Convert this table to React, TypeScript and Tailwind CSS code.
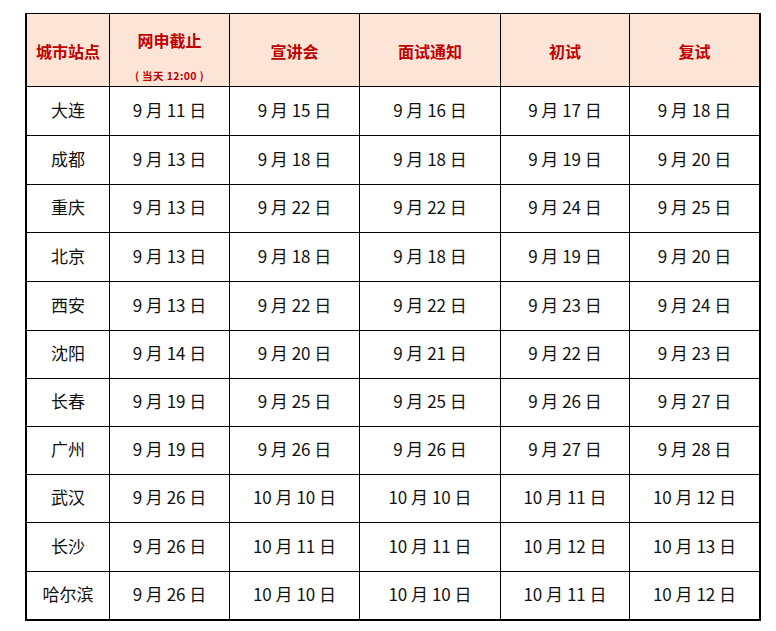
import React from "react";

const headers = ["城市站点", "网申截止", "宣讲会", "面试通知", "初试", "复试"];

const rows: string[][] = [
  ["大连", "9 月 11 日", "9 月 15 日", "9 月 16 日", "9 月 17 日", "9 月 18 日"],
  ["成都", "9 月 13 日", "9 月 18 日", "9 月 18 日", "9 月 19 日", "9 月 20 日"],
  ["重庆", "9 月 13 日", "9 月 22 日", "9 月 22 日", "9 月 24 日", "9 月 25 日"],
  ["北京", "9 月 13 日", "9 月 18 日", "9 月 18 日", "9 月 19 日", "9 月 20 日"],
  ["西安", "9 月 13 日", "9 月 22 日", "9 月 22 日", "9 月 23 日", "9 月 24 日"],
  ["沈阳", "9 月 14 日", "9 月 20 日", "9 月 21 日", "9 月 22 日", "9 月 23 日"],
  ["长春", "9 月 19 日", "9 月 25 日", "9 月 25 日", "9 月 26 日", "9 月 27 日"],
  ["广州", "9 月 19 日", "9 月 26 日", "9 月 26 日", "9 月 27 日", "9 月 28 日"],
  ["武汉", "9 月 26 日", "10 月 10 日", "10 月 10 日", "10 月 11 日", "10 月 12 日"],
  ["长沙", "9 月 26 日", "10 月 11 日", "10 月 11 日", "10 月 12 日", "10 月 13 日"],
  ["哈尔滨", "9 月 26 日", "10 月 10 日", "10 月 10 日", "10 月 11 日", "10 月 12 日"],
];

export default function App() {
  return (
    <div
      className="w-[776px] h-[631px] bg-white pt-[13px] pl-[25px]"
      style={{ fontFamily: '"Noto Sans CJK SC", "Noto Sans", sans-serif' }}
    >
      <div className="w-[736px] border-t border-l-2 border-r-2 border-b-2 border-black bg-black grid gap-px grid-cols-[82px_119px_129px_140px_128px_129px] grid-rows-[72px_48px_48px_47px_48px_48px_47px_47px_47px_47px_48px_47px]">
        {headers.map((h, i) =>
          i === 1 ? (
            <div
              key={h}
              className="bg-[#fce4d6] text-[#c00000] font-bold flex flex-col items-center pt-[18px]"
            >
              <span className="text-[16px] leading-none">{h}</span>
              <span className="text-[10.5px] leading-none mt-[23px] tracking-[0.4px]">( 当天 12:00 )</span>
            </div>
          ) : (
            <div
              key={h}
              className="bg-[#fce4d6] text-[#c00000] font-bold flex items-center justify-center"
            >
              <span className="text-[16px] leading-none mt-[2px]">{h}</span>
            </div>
          )
        )}
        {rows.map((r, ri) =>
          r.map((c, ci) => (
            <div
              key={ri + "-" + ci}
              className="bg-white text-[#111] text-[17px] leading-none flex items-center justify-center pb-[4px]"
            >
              {c}
            </div>
          ))
        )}
      </div>
    </div>
  );
}
